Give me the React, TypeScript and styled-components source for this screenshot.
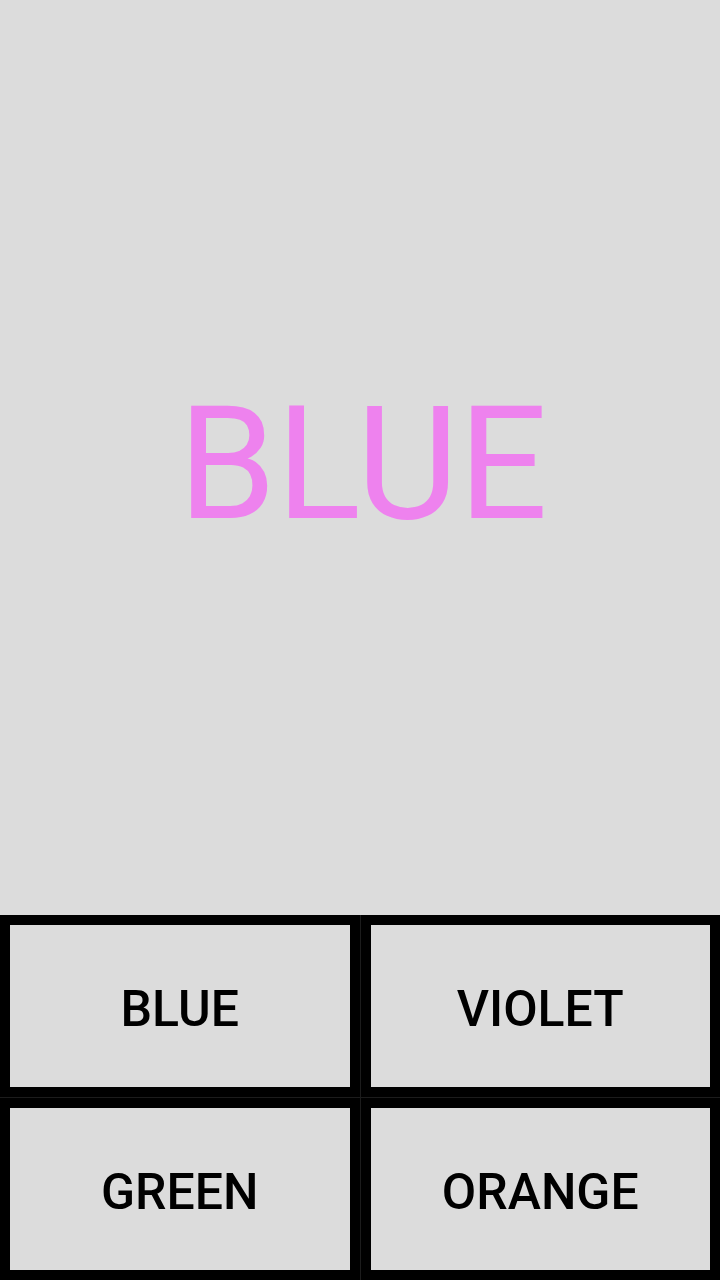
import React from "react";
import styled, { createGlobalStyle } from "styled-components";

const GlobalStyle = createGlobalStyle`
  html, body {
    margin: 0;
    padding: 0;
    background: #dcdcdc;
  }
  #root {
    width: 720px;
    height: 1280px;
  }
`;

const Screen = styled.div`
  width: 720px;
  height: 1280px;
  display: flex;
  flex-direction: column;
  background: #dcdcdc;
  font-family: Roboto, "Liberation Sans", sans-serif;
`;

const Stage = styled.div`
  flex: 1;
  display: flex;
  align-items: center;
  justify-content: center;
  padding-top: 14px;
`;

const Word = styled.div<{ $color: string }>`
  color: ${(p) => p.$color};
  font-size: 157px;
  font-weight: 400;
  line-height: 1;
  margin-left: 6px;
`;

const Choices = styled.div`
  height: 365px;
  display: grid;
  grid-template-columns: 1fr 1fr;
  grid-template-rows: 1fr 1fr;
  gap: 1px;
  background: #1c1c1c;
`;

const Choice = styled.button`
  border: 10px solid #000;
  margin: 0;
  padding: 5px 0 0 0;
  background: #dcdcdc;
  color: #000;
  font-family: Roboto, "Liberation Sans", sans-serif;
  font-size: 50px;
  font-weight: 500;
  display: flex;
  align-items: center;
  justify-content: center;
  cursor: pointer;
`;

const options = ["BLUE", "VIOLET", "GREEN", "ORANGE"];

export default function App() {
  return (
    <>
      <GlobalStyle />
      <Screen>
        <Stage>
          <Word $color="#ee82ee">BLUE</Word>
        </Stage>
        <Choices>
          {options.map((o) => (
            <Choice key={o}>{o}</Choice>
          ))}
        </Choices>
      </Screen>
    </>
  );
}
